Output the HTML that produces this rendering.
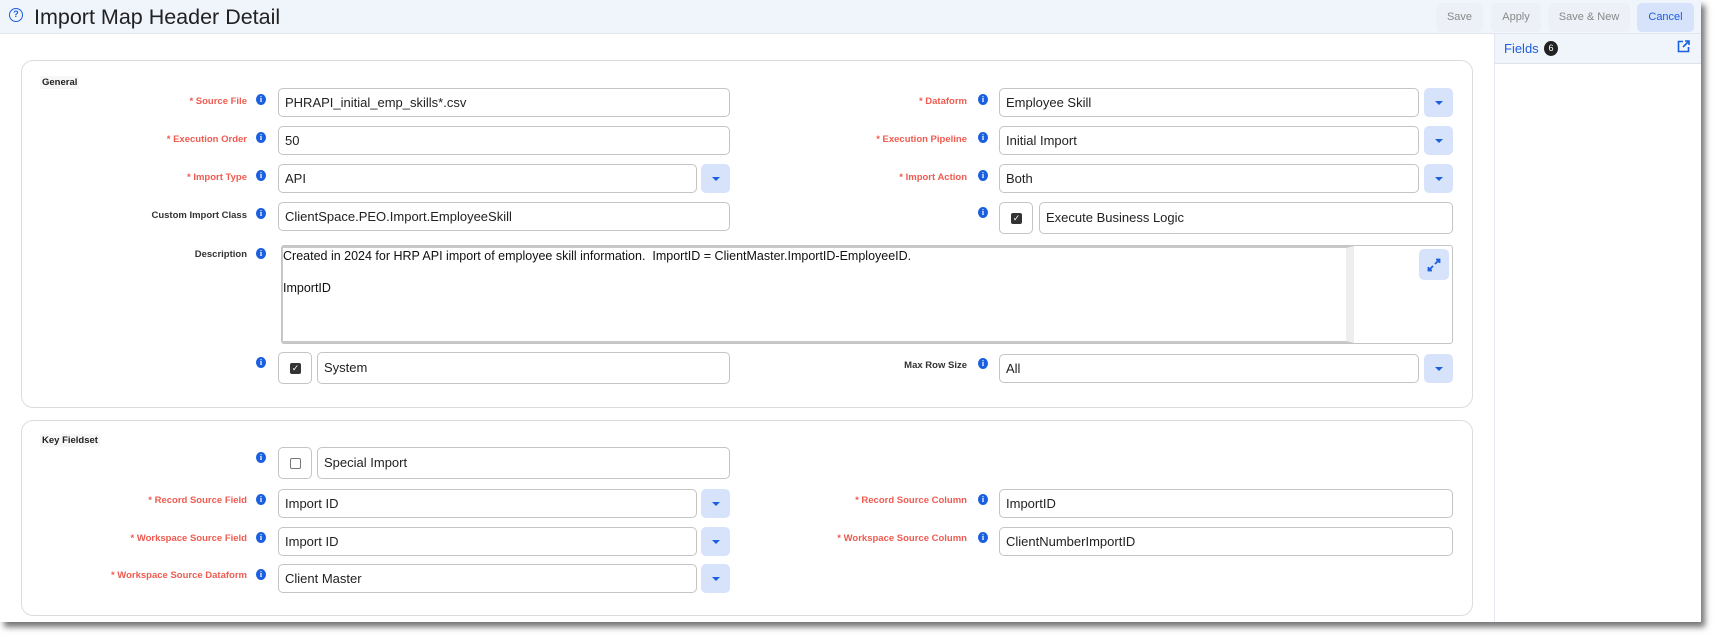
<!DOCTYPE html>
<html><head><meta charset="utf-8"><style>
*{box-sizing:border-box;margin:0;padding:0}
body{width:1716px;height:636px;background:#fff;font-family:"Liberation Sans",sans-serif;position:relative;overflow:hidden}
.page{position:absolute;left:0;top:0;width:1701px;height:622px;background:#fff;box-shadow:4px 5px 6px rgba(0,0,0,.55)}
.hdr{position:absolute;left:0;top:0;width:1701px;height:34px;background:#f0f4fb;border-bottom:1px solid #e2e6ee}
.title{position:absolute;left:34px;top:5px;font-size:21.5px;color:#222}
.help{position:absolute;left:9px;top:8px;width:14px;height:14px;border:1.5px solid #1a5fe0;border-radius:50%;font-size:9px;color:#1a5fe0;text-align:center;line-height:11px;font-weight:bold}
.btn{position:absolute;top:3px;height:29px;border-radius:5px;font-size:11px;color:#888;text-align:center;line-height:29px;background:#edf1f7}
.panel{position:absolute;left:1494px;top:34px;width:207px;bottom:0;border-left:1px solid #e2e6ee}
.ph{height:30px;background:#f0f4fb;border-bottom:1px solid #dde2ea;position:relative}
.card{position:absolute;left:21px;width:1452px;border:1px solid #dcdcdc;border-radius:12px}
.sec{position:absolute;left:40px;font-size:9.5px;font-weight:bold;color:#222;background:#f7f7f7;padding:1px 2px}
.lbl{position:absolute;font-size:9.5px;font-weight:bold;color:#333;text-align:right;width:220px}
.req{color:#ef5b50}
.i{position:absolute;width:10px;height:11px;border-radius:50%;background:#1a5fe0;color:#fff;font-size:8px;font-weight:bold;text-align:center;line-height:11px;font-family:"Liberation Serif",serif}
.in{position:absolute;height:29px;border:1px solid #c4c4c4;border-radius:5px;background:#fff;font-size:13px;color:#222;padding-left:6px;line-height:27px}
.dd{position:absolute;width:29px;height:29px;border-radius:5px;background:#d6e3fb}
.dd:after{content:"";position:absolute;left:11px;top:13px;border-left:4px solid transparent;border-right:4px solid transparent;border-top:4px solid #1a5fe0}
.cb{position:absolute;width:34px;height:32px;border:1px solid #c4c4c4;border-radius:5px;background:#fff}
.cb span{position:absolute;left:11px;top:10px;width:11px;height:11px;border-radius:2px;background:#333;color:#fff;font-size:9px;line-height:11px;text-align:center}
.cb span.e{background:#fff;border:1px solid #777}
</style></head><body>
<div class="page">
<div class="hdr">
 <div class="help">?</div>
 <div class="title">Import Map Header Detail</div>
 <div class="btn" style="left:1436px;width:47px">Save</div>
 <div class="btn" style="left:1491px;width:50px">Apply</div>
 <div class="btn" style="left:1548px;width:82px">Save &amp; New</div>
 <div class="btn" style="left:1637px;width:57px;background:#d6e3fb;color:#1a5fe0">Cancel</div>
</div>
<div class="panel"><div class="ph">
 <span style="position:absolute;left:9px;top:7px;font-size:13px;color:#1a5fe0">Fields</span>
 <span style="position:absolute;left:49px;top:7px;width:14px;height:15px;border-radius:50%;background:#222;color:#fff;font-size:9px;text-align:center;line-height:15px">6</span>
 <svg style="position:absolute;left:182px;top:6px" width="13" height="13" viewBox="0 0 13 13" fill="none" stroke="#1a5fe0" stroke-width="1.6"><path d="M6 1.5H1.5v10h10V7M8 1h4v4M12 1L6 7"/></svg>
</div></div>

<div class="card" style="top:60px;height:348px"></div>
<div class="sec" style="top:76px">General</div>

<div class="lbl req" style="left:27px;top:96px">* Source File</div><div class="i" style="left:256px;top:94px">i</div>
<div class="in" style="left:278px;top:88px;width:452px">PHRAPI_initial_emp_skills*.csv</div>
<div class="lbl req" style="left:27px;top:134px">* Execution Order</div><div class="i" style="left:256px;top:132px">i</div>
<div class="in" style="left:278px;top:126px;width:452px">50</div>
<div class="lbl req" style="left:27px;top:172px">* Import Type</div><div class="i" style="left:256px;top:170px">i</div>
<div class="in" style="left:278px;top:164px;width:419px">API</div><div class="dd" style="left:701px;top:164px"></div>
<div class="lbl" style="left:27px;top:210px">Custom Import Class</div><div class="i" style="left:256px;top:208px">i</div>
<div class="in" style="left:278px;top:202px;width:452px">ClientSpace.PEO.Import.EmployeeSkill</div>

<div class="lbl req" style="left:747px;top:96px">* Dataform</div><div class="i" style="left:978px;top:94px">i</div>
<div class="in" style="left:999px;top:88px;width:420px">Employee Skill</div><div class="dd" style="left:1424px;top:88px"></div>
<div class="lbl req" style="left:747px;top:134px">* Execution Pipeline</div><div class="i" style="left:978px;top:132px">i</div>
<div class="in" style="left:999px;top:126px;width:420px">Initial Import</div><div class="dd" style="left:1424px;top:126px"></div>
<div class="lbl req" style="left:747px;top:172px">* Import Action</div><div class="i" style="left:978px;top:170px">i</div>
<div class="in" style="left:999px;top:164px;width:420px">Both</div><div class="dd" style="left:1424px;top:164px"></div>
<div class="i" style="left:978px;top:207px">i</div>
<div class="cb" style="left:999px;top:202px"><span>✓</span></div>
<div class="in" style="left:1039px;top:202px;width:414px;height:32px;line-height:30px">Execute Business Logic</div>

<div class="lbl" style="left:27px;top:249px">Description</div><div class="i" style="left:256px;top:248px">i</div>
<div style="position:absolute;left:281px;top:245px;width:1172px;height:99px;border:1px solid #c4c4c4;border-radius:3px">
 <div style="position:absolute;left:0;top:0;width:1072px;height:97px;border:2px solid #c8c8c8;border-left-width:1px;border-right:8px solid #eee;font-size:12.5px;color:#111;padding:0;line-height:16px">Created in 2024 for HRP API import of employee skill information.&nbsp; ImportID = ClientMaster.ImportID-EmployeeID.<br><br>ImportID</div>
 <div style="position:absolute;left:1137px;top:3px;width:30px;height:31px;border-radius:5px;background:#d6e3fb">
  <svg style="position:absolute;left:8px;top:9px" width="14" height="14" viewBox="0 0 14 14" fill="none" stroke="#1a5fe0" stroke-width="1.8"><path d="M8 6l4-4M9 1.5h3.5V5M6 8l-4 4M1.5 9v3.5H5"/></svg>
 </div>
</div>

<div class="i" style="left:256px;top:357px">i</div>
<div class="cb" style="left:278px;top:352px"><span>✓</span></div>
<div class="in" style="left:317px;top:352px;width:413px;height:32px;line-height:30px">System</div>
<div class="lbl" style="left:747px;top:360px">Max Row Size</div><div class="i" style="left:978px;top:358px">i</div>
<div class="in" style="left:999px;top:354px;width:420px">All</div><div class="dd" style="left:1424px;top:354px"></div>

<div class="card" style="top:420px;height:196px"></div>
<div class="sec" style="top:434px">Key Fieldset</div>
<div class="i" style="left:256px;top:452px">i</div>
<div class="cb" style="left:278px;top:447px"><span class="e"></span></div>
<div class="in" style="left:317px;top:447px;width:413px;height:32px;line-height:30px">Special Import</div>

<div class="lbl req" style="left:27px;top:495px">* Record Source Field</div><div class="i" style="left:256px;top:494px">i</div>
<div class="in" style="left:278px;top:489px;width:419px">Import ID</div><div class="dd" style="left:701px;top:489px"></div>
<div class="lbl req" style="left:27px;top:533px">* Workspace Source Field</div><div class="i" style="left:256px;top:532px">i</div>
<div class="in" style="left:278px;top:527px;width:419px">Import ID</div><div class="dd" style="left:701px;top:527px"></div>
<div class="lbl req" style="left:27px;top:570px">* Workspace Source Dataform</div><div class="i" style="left:256px;top:569px">i</div>
<div class="in" style="left:278px;top:564px;width:419px">Client Master</div><div class="dd" style="left:701px;top:564px"></div>

<div class="lbl req" style="left:747px;top:495px">* Record Source Column</div><div class="i" style="left:978px;top:494px">i</div>
<div class="in" style="left:999px;top:489px;width:454px">ImportID</div>
<div class="lbl req" style="left:747px;top:533px">* Workspace Source Column</div><div class="i" style="left:978px;top:532px">i</div>
<div class="in" style="left:999px;top:527px;width:454px">ClientNumberImportID</div>
</div>
</body></html>
